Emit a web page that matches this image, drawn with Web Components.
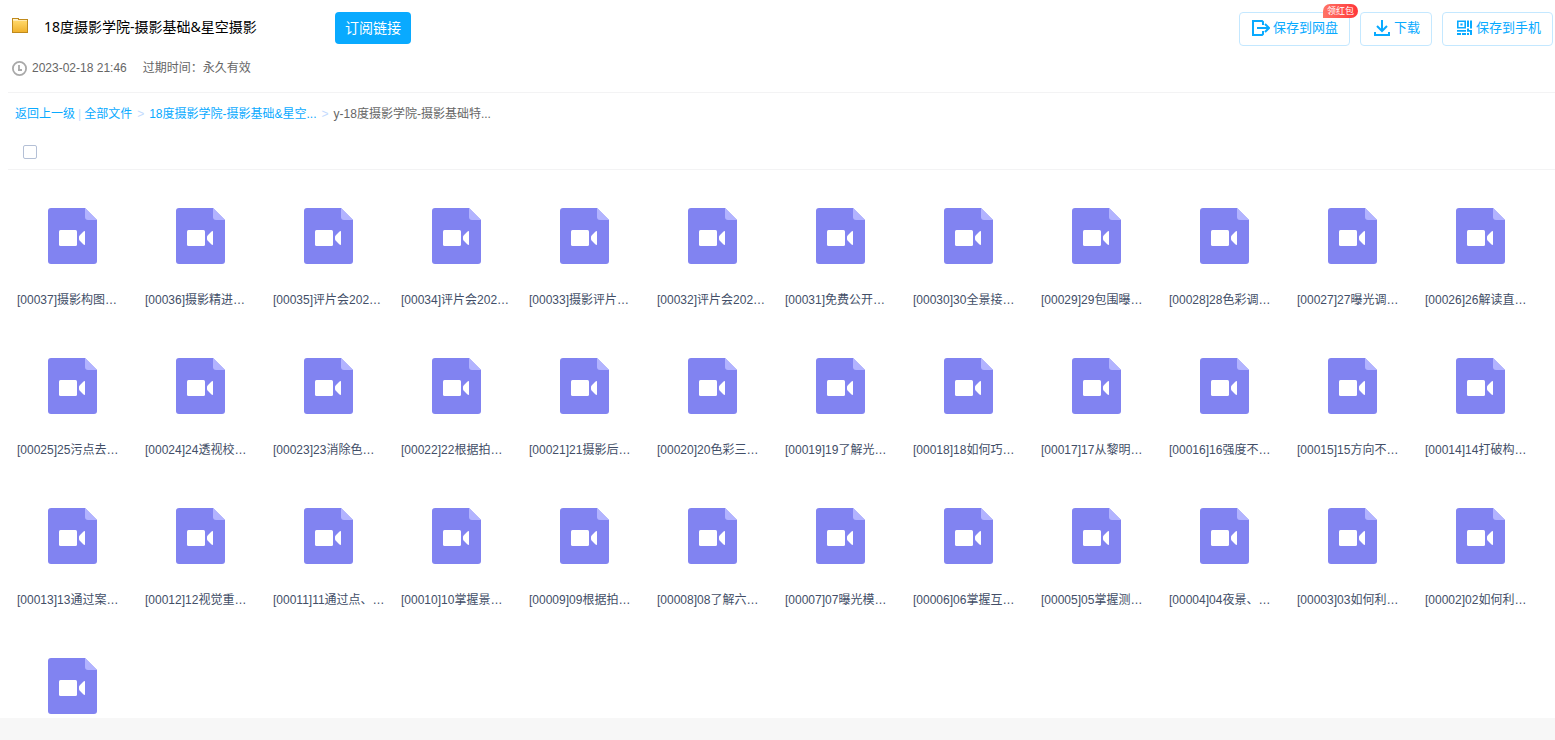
<!DOCTYPE html>
<html lang="zh-CN">
<head>
<meta charset="utf-8">
<title>18度摄影学院-摄影基础&amp;星空摄影</title>
<style>
html, body { margin: 0; height: 100%; }
body { font: 12px/20px "Liberation Sans", "Noto Sans CJK SC", sans-serif; background: #f7f7f7; }
</style>
</head>
<body>
<share-page></share-page>
<script>
const define = (name, html, setup) => {
  const template = document.createElement('template');
  template.innerHTML = html;
  customElements.define(name, class extends HTMLElement {
    constructor() {
      super();
      this.attachShadow({ mode: 'open' }).append(template.content.cloneNode(true));
    }
    connectedCallback() { if (setup) setup(this, this.shadowRoot); }
  });
};

define('action-button', `
<style>
:host { display: block; position: relative; }
button { display: flex; align-items: center; gap: 3px; box-sizing: border-box; height: 34px; padding: 0 11px 2px 12px; border: 1px solid #c4e8ff; border-radius: 4px; background: #fff; color: #09aaff; font: 13px/20px "Liberation Sans", "Noto Sans CJK SC", sans-serif; cursor: pointer; white-space: nowrap; }
::slotted(svg) { display: block; width: 18px; height: 18px; }
::slotted([slot=badge]) { position: absolute; top: -8px; right: -8px; box-sizing: border-box; height: 14px; padding: 0 4px; border-radius: 7px 7px 7px 0; background: linear-gradient(90deg, #ff7466, #ff3639); color: #fff; font-size: 9px; line-height: 14px; white-space: nowrap; }
</style>
<button type="button"><slot name="icon"></slot><span><slot></slot></span></button><slot name="badge"></slot>`);

define('share-header', `
<style>
:host { display: block; margin-left: 8px; padding: 12px 2px 12px 4px; border-bottom: 1px solid #f3f3f4; }
.top { display: flex; align-items: flex-start; }
.folder { flex: none; width: 16px; height: 16px; margin: 6px 16px 0 0; }
h1 { flex: none; width: 291px; margin: 0; color: #000; font: 14px/30px "Noto Sans", "Noto Sans CJK SC", sans-serif; white-space: nowrap; }
.subscribe { height: 32px; padding: 0 10px; border: 0; border-radius: 4px; background: #09aaff; color: #fff; font: 14px/20px "Liberation Sans", "Noto Sans CJK SC", sans-serif; cursor: pointer; }
.actions { display: flex; gap: 10px; margin-left: auto; }
.meta { display: flex; align-items: center; height: 24px; margin-top: 10px; color: #666; }
.meta svg { width: 16px; height: 16px; margin-right: 4px; }
.meta time { margin-right: 16px; }
</style>
<div class="top">
  <svg class="folder" viewBox="0 0 16 16" aria-hidden="true">
    <defs><linearGradient id="f" x1="0" y1="0" x2="0" y2="1"><stop offset="0" stop-color="#ffd768"/><stop offset="1" stop-color="#f0b22c"/></linearGradient></defs>
    <path d="M0 0h7v1h9v14H0z" fill="#c08a1c"/><path d="M1 1h5v1H1z" fill="#fff3cf"/><path d="M1 3h14v11H1z" fill="url(#f)"/><path d="M1 2h14v1H1z" fill="#ffe9ae"/>
  </svg>
  <h1>18度摄影学院-摄影基础&amp;星空摄影</h1>
  <button class="subscribe" type="button">订阅链接</button>
  <div class="actions">
    <action-button>
      <svg slot="icon" viewBox="0 0 18 18" fill="none" stroke="#09aaff" stroke-width="2" aria-hidden="true"><path d="M11 6V3L10 2H1V16H10L11 15V12"/><path d="M5 9H17M13 5L17 9L13 13" stroke="#fff" stroke-width="4"/><path d="M5 9H17M13 5L17 9L13 13"/></svg>
      保存到网盘<span slot="badge">领红包</span>
    </action-button>
    <action-button>
      <svg slot="icon" viewBox="0 0 18 18" fill="none" stroke="#09aaff" stroke-width="2" aria-hidden="true"><path d="M9 1V11M4 7L9 12L14 7M2 13V16H16V13"/></svg>
      下载
    </action-button>
    <action-button>
      <svg slot="icon" viewBox="0 0 18 18" fill="#09aaff" aria-hidden="true"><path fill-rule="evenodd" d="M2 1.5h9v8H2zM3.6 3v5h5.8V3zM5.4 4.5h2.2v2H5.4zM12 1.5h2v6.5h-2zM15 1.5h2v8h-2zM2 11h9v1.7H2zM2 14h4v2H2zM7 14h4v2H7zM12 9.5h2v1.5h-2zM12 14h2v2h-2zM12 11h5v5h-2v-3.3h-3z"/></svg>
      保存到手机
    </action-button>
  </div>
</div>
<div class="meta">
  <svg viewBox="0 0 16 16" fill="none" stroke="#a9a9a9" aria-hidden="true"><circle cx="7.5" cy="8.5" r="6.6" stroke-width="1.8"/><path d="M7 5V10M6 10H10" stroke-width="1.8"/></svg>
  <time datetime="2023-02-18T21:46">2023-02-18 21:46</time><span>过期时间：永久有效</span>
</div>`);

define('path-trail', `
<style>
:host { display: block; margin-left: 8px; }
nav { display: flex; align-items: center; height: 41px; padding-left: 7px; color: #666; white-space: nowrap; }
a { color: #09aaff; text-decoration: none; }
i { font-style: normal; color: #c4dbfe; }
.bar { margin: 0 3px; }
.sep { margin: 0 5px; }
</style>
<nav aria-label="路径"><a href="#">返回上一级</a><i class="bar">|</i><a href="#">全部文件</a><i class="sep">&gt;</i><a href="#">18度摄影学院-摄影基础&amp;星空...</a><i class="sep">&gt;</i><span>y-18度摄影学院-摄影基础特...</span></nav>`);

define('select-bar', `
<style>
:host { display: block; box-sizing: border-box; height: 36px; margin-left: 8px; padding: 11px 0 0 15px; border-bottom: 1px solid #f3f3f4; }
input { display: block; appearance: none; box-sizing: border-box; width: 14px; height: 14px; margin: 0; border: 1px solid #b4c0d6; border-radius: 2px; background: #fff; }
input:checked { background: #09aaff; }
</style>
<input type="checkbox" aria-label="全选">`);

define('video-file', `
<style>
:host { display: block; box-sizing: border-box; height: 150px; padding: 38px 8px 0 9px; color: #424e67; }
svg { display: block; width: 49px; height: 56px; margin: 0 0 26px 31px; }
a { display: block; color: inherit; text-decoration: none; white-space: nowrap; }
</style>
<svg viewBox="0 0 49 56" aria-hidden="true"><path d="M3 0H37L49 12V53Q49 56 46 56H3Q0 56 0 53V3Q0 0 3 0Z" fill="#8183f1"/><path d="M37 0L49 12H40Q37 12 37 9Z" fill="#b2b3ff"/><rect x="11" y="22" width="18" height="16" rx="1.5" fill="#fff"/><path d="M37 23V37L35.5 36.5L31.6 32.5Q31 31.8 31 31V29Q31 28.2 31.6 27.5L35.5 23.5Z" fill="#fff"/></svg>
<a href="#"><slot></slot></a>`);

define('file-grid', `
<style>
:host { display: grid; grid-template-columns: repeat(auto-fill, 128px); margin-left: 8px; }
</style>`, (host, root) => {
  const names = ['摄影构图', '摄影精进', '评片会202', '评片会202', '摄影评片', '评片会202', '免费公开', '30全景接', '29包围曝', '28色彩调', '27曝光调', '26解读直',
    '25污点去', '24透视校', '23消除色', '22根据拍', '21摄影后', '20色彩三', '19了解光', '18如何巧', '17从黎明', '16强度不', '15方向不', '14打破构',
    '13通过案', '12视觉重', '11通过点、', '10掌握景', '09根据拍', '08了解六', '07曝光模', '06掌握互', '05掌握测', '04夜景、', '03如何利', '02如何利'];
  names.forEach((name, i) => {
    const file = document.createElement('video-file');
    file.textContent = '[' + String(37 - i).padStart(5, '0') + ']' + name + '…';
    root.append(file);
  });
  root.append(document.createElement('video-file'));
});

define('share-page', `
<style>
:host { display: flex; flex-direction: column; height: 100vh; }
main { flex: 1; min-height: 0; overflow: hidden; background: #fff; }
footer { flex: none; height: 22px; background: #f7f7f7; }
</style>
<main><share-header></share-header><path-trail></path-trail><select-bar></select-bar><file-grid></file-grid></main>
<footer></footer>`);
</script>
</body>
</html>
